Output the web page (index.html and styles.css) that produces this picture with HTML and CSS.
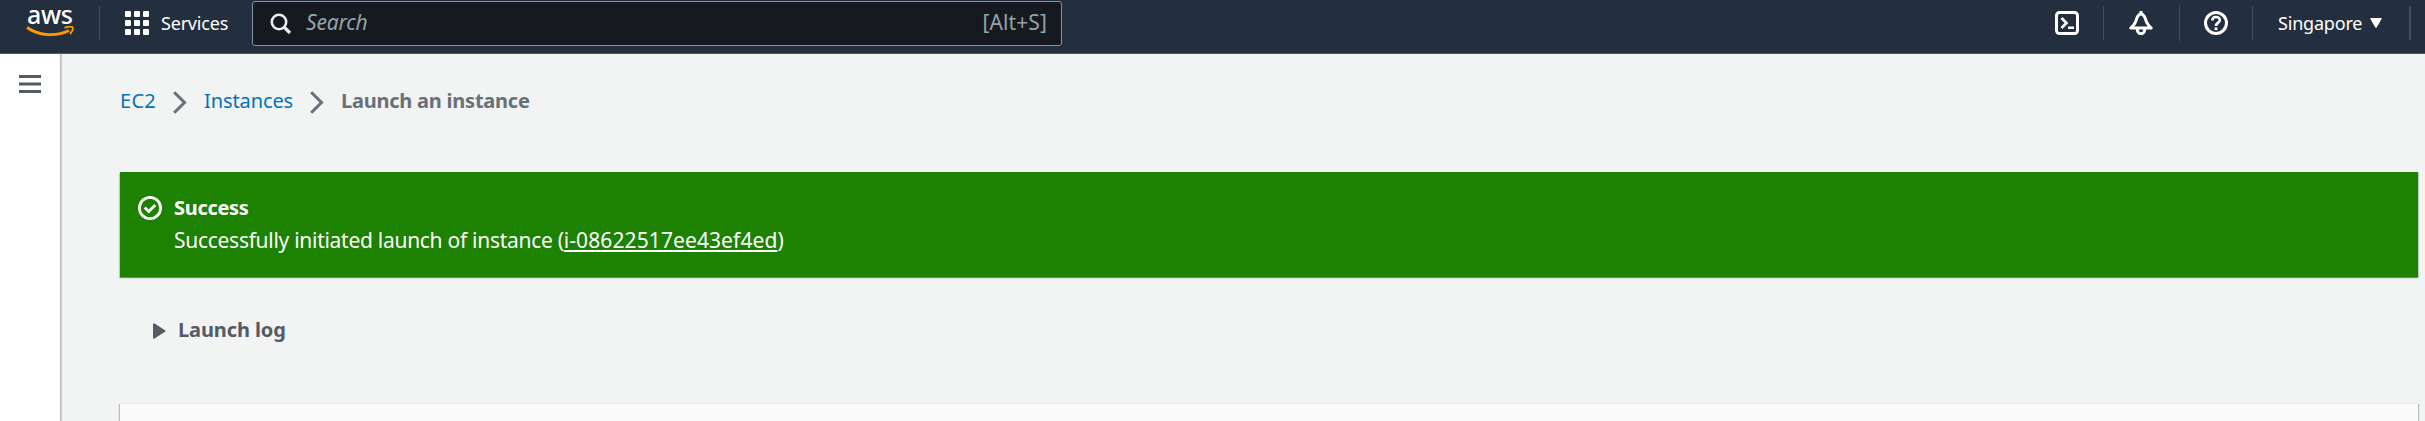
FILE: index.html
```html
<!DOCTYPE html>
<html lang="en">
<head>
<meta charset="utf-8">
<title>Launch an instance | EC2</title>
<link rel="stylesheet" href="styles.css">
</head>
<body>
<header class="topbar">
  <a class="logo" aria-label="AWS home">
    <span class="logo-word">aws</span>
    <svg class="logo-smile" width="48" height="12" viewBox="0 0 48 12" fill="none" stroke="#f90"><path d="M1 1.500C14 10.500 31 10.500 43 4.500" stroke-width="2.800"/><path d="M38.500 1.800C42 .500 45.500.300 46.500 1.300 47.200 2.500 46.200 5.500 44 8" stroke-width="1.900"/></svg>
  </a>
  <i class="rule rule-logo"></i>
  <div class="services">
    <svg width="24" height="24" viewBox="0 0 24 24" fill="#fff"><rect width="6" height="6" rx="1"/><rect x="9" width="6" height="6" rx="1"/><rect x="18" width="6" height="6" rx="1"/><rect y="9" width="6" height="6" rx="1"/><rect x="9" y="9" width="6" height="6" rx="1"/><rect x="18" y="9" width="6" height="6" rx="1"/><rect y="18" width="6" height="6" rx="1"/><rect x="9" y="18" width="6" height="6" rx="1"/><rect x="18" y="18" width="6" height="6" rx="1"/></svg>
    <span class="services-label">Services</span>
  </div>
  <div class="search">
    <svg width="22" height="22" viewBox="0 0 22 22" fill="none" stroke="#eaeded" stroke-width="2.600"><circle cx="9" cy="9" r="7.200"/><path d="M14 14l6 6" stroke-width="3.200"/></svg>
    <span class="search-text">Search</span>
    <span class="search-key">[Alt+S]</span>
  </div>
  <div class="tools">
    <svg class="tool-shell" width="24" height="24" viewBox="0 0 24 24" fill="none" stroke="#fff" stroke-width="3"><rect x="1.500" y="1.500" width="21" height="21" rx="3"/><path d="M6.500 7l5 5-5 5M13 16.800h6" stroke-width="2.600"/></svg>
    <i class="rule rule-a"></i>
    <svg class="tool-bell" width="24" height="24" viewBox="0 0 24 24" fill="none" stroke="#fff" stroke-width="3" stroke-linejoin="round"><path d="M12 2.500C9 4 7.800 6 7.200 9 6.600 12.500 4.500 14.500 1.800 17H22.200C19.500 14.500 17.400 12.500 16.800 9 16.200 6 15 4 12 2.500Z"/><path d="M8.300 18c0 6.300 7.400 6.300 7.400 0"/><path d="M12 0v3"/></svg>
    <i class="rule rule-b"></i>
    <svg class="tool-help" width="24" height="24" viewBox="0 0 24 24" fill="none" stroke="#fff" stroke-width="3"><circle cx="12" cy="12" r="10.500"/><path d="M8.300 9.500C8.300 4.800 15.800 5 15.800 9.200 15.800 11.800 12 11.600 12 15" stroke-width="2.600"/><path d="M12 16.400v2.800" stroke-width="2.800"/></svg>
    <i class="rule rule-c"></i>
    <span class="region">Singapore</span>
    <svg class="caret" width="12" height="10" viewBox="0 0 12 10" fill="#fff"><path d="M1 0h10q1.200 0 .6 1L6.800 9.300q-.8 1-1.600 0L.4 1Q-.2 0 1 0Z"/></svg>
    <i class="rule rule-d"></i>
  </div>
</header>
<div class="shell">
  <nav class="side">
    <svg width="22" height="18" viewBox="0 0 22 18" fill="#545b64"><path d="M0 0h22v3H0zM0 7.500h22v3H0zM0 15h22v3H0z"/></svg>
  </nav>
  <main class="content">
    <div class="crumbs">
      <a class="crumb crumb-ec2">EC2</a>
      <svg class="chev chev-a" width="14" height="23" viewBox="0 0 14 23" fill="none" stroke="#687078" stroke-width="3"><path d="M1.200 1.200L11.500 11.500 1.200 21.800"/></svg>
      <a class="crumb crumb-inst">Instances</a>
      <svg class="chev chev-b" width="14" height="23" viewBox="0 0 14 23" fill="none" stroke="#687078" stroke-width="3"><path d="M1.200 1.200L11.500 11.500 1.200 21.800"/></svg>
      <span class="crumb-here">Launch an instance</span>
    </div>
    <section class="flash">
      <svg width="24" height="24" viewBox="0 0 24 24" fill="none" stroke="#fff" stroke-width="2.800"><circle cx="12" cy="12" r="10.600"/><path d="M6.700 11.500l4 4 6.600-6.600"/></svg>
      <div class="flash-body">
        <div class="flash-title">Success</div>
        <div class="flash-text">Successfully initiated launch of instance (<a class="flash-link">i-08622517ee43ef4ed</a>)</div>
      </div>
    </section>
    <div class="log">
      <svg width="13" height="16" viewBox="0 0 13 16" fill="#545b64"><path d="M0 1.500Q0-.3 1.600.500L12 7.200q1 .8 0 1.600L1.600 15.500Q0 16.300 0 14.500Z"/></svg>
      <span class="log-label">Launch log</span>
    </div>
    <section class="panel"></section>
  </main>
</div>
</body>
</html>
```
FILE: styles.css
```css
* { box-sizing: border-box; }
body {
  margin: 0;
  height: 421px;
  overflow: hidden;
  background: #f2f3f3;
  font-family: "Noto Sans", "Open Sans", sans-serif;
  font-size: 20px;
  white-space: nowrap;
}
svg { display: block; flex: none; }

.topbar {
  display: flex;
  align-items: flex-start;
  height: 54px;
  background: #232f3e;
  border-bottom: 1px solid #545b64;
}
.logo { width: 48px; margin-left: 26px; padding-top: 3px; display: block; }
.logo-word {
  display: block;
  height: 23px;
  padding-left: 1px;
  font-size: 25px;
  line-height: 23px;
  font-weight: 500;
  letter-spacing: -0.4px;
  color: #fff;
}
.rule { width: 1px; height: 34px; margin-top: 6px; background: #414d5c; flex: none; }
.rule-logo { margin-left: 25px; }
.services { display: flex; margin-left: 25px; padding-top: 11px; width: 127px; }
.services-label {
  margin-left: 12px;
  font-size: 18px;
  line-height: 24px;
  letter-spacing: -0.2px;
  color: #fff;
}
.search {
  display: flex;
  align-items: center;
  width: 810px;
  height: 45px;
  margin-top: 1px;
  padding: 0 14px 0 17px;
  background: #16191f;
  border: 1px solid #879596;
  border-radius: 3px;
  color: #95a5a6;
}
.search-text { margin-left: 14px; font-size: 21px; font-style: italic; letter-spacing: -0.2px; line-height: 42px; padding-bottom: 3px; }
.search-key { margin-left: auto; font-size: 21px; letter-spacing: 0.1px; padding-bottom: 3px; }

.tools { display: flex; margin-left: auto; }
.tool-shell, .tool-bell, .tool-help { margin-top: 11px; }
.rule-a { margin-left: 24px; }
.tool-bell { margin-left: 25px; }
.rule-b { margin-left: 26px; margin-top: 5px; height: 36px; }
.tool-help { margin-left: 24px; }
.rule-c { margin-left: 24px; }
.region { width: 84px; margin: 11px 0 0 25px; font-size: 18px; line-height: 24px; color: #fff; letter-spacing: -0.2px; }
.caret { margin: 18px 0 0 8px; }
.rule-d { width: 2px; margin: 6px 14px 0 27px; }

.shell { display: flex; height: 367px; }
.side {
  width: 61px;
  padding: 21px 0 0 19px;
  background: #fff;
  border-right: 1px solid #b5bcc0;
  box-shadow: 1px 0 1px rgba(0, 28, 36, 0.15);
}
.content { flex: 1; padding: 0 7px 0 59px; }
.crumbs { display: flex; height: 118px; padding-top: 33px; line-height: 28px; }
.crumb { color: #0073bb; }
.crumb-ec2 { width: 53px; letter-spacing: 0.3px; }
.crumb-inst { width: 90px; margin-left: 17px; letter-spacing: -0.1px; }
.chev { margin-top: 4px; }
.chev-b { margin-left: 16px; }
.crumb-here { margin-left: 17px; color: #687078; font-weight: 700; letter-spacing: -0.23px; }

.flash {
  display: flex;
  height: 105px;
  padding: 24px 18px;
  background: #1d8102;
  color: #fff;
  box-shadow: 0 1px 1px rgba(0, 28, 36, 0.3), 1px 1px 1px rgba(0, 28, 36, 0.15), -1px 1px 1px rgba(0, 28, 36, 0.15);
}
.flash-body { margin-left: 12px; }
.flash-title { height: 32px; line-height: 24px; font-weight: 700; letter-spacing: -0.3px; }
.flash-text { font-size: 21px; line-height: 24px; letter-spacing: -0.28px; }
.flash-link { letter-spacing: 0.1px; text-decoration: underline 2px; text-underline-offset: 2px; text-decoration-skip-ink: none; }
.log { display: flex; height: 126px; padding: 46px 0 0 33px; color: #545b64; }
.log-label { margin-left: 12px; line-height: 28px; margin-top: -7px; font-weight: 700; letter-spacing: -0.1px; }
.panel {
  height: 18px;
  background: #fafafa;
  border-top: 1px solid #eaeded;
  box-shadow: 1px 1px 1px rgba(0, 28, 36, 0.25), -1px 1px 1px rgba(0, 28, 36, 0.25);
}
```
